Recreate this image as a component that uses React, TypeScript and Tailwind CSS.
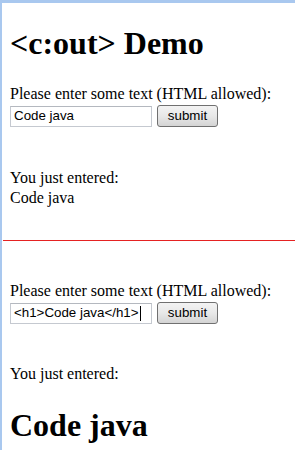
import React from "react";

function Form({ value, caret }: { value: string; caret?: boolean }) {
  return (
    <div className="flex flex-col">
      <div className="text-[16px] leading-[18px]">Please enter some text (HTML allowed):</div>
      <div className="flex items-center gap-[5px] mt-[2px]">
        <div className="w-[142px] h-[21px] border border-[#c5c9d0] border-t-[#b4b8bf] bg-white flex items-center pl-[3px] text-[13.33px] font-['Liberation_Sans',Arial,sans-serif] text-black">
          <span>{value}</span>
          {caret && <span className="inline-block w-px h-[15px] bg-black ml-[1px]" />}
        </div>
        <div className="w-[61px] h-[22px] rounded-[3px] border border-[#707070] bg-gradient-to-b from-[#f3f3f3] via-[#e8e8e8] to-[#d4d4d4] flex items-center justify-center text-[13.33px] font-['Liberation_Sans',Arial,sans-serif] text-black">
          submit
        </div>
      </div>
    </div>
  );
}

export default function App() {
  return (
    <div className="w-[295px] h-[450px] overflow-hidden bg-white border-t-[3px] border-l-2 border-[#a9c8ef] font-['Liberation_Serif','Times_New_Roman',serif] text-black flex flex-col">
      <div className="pl-[8px] flex flex-col">
        <h1 className="text-[32px] font-bold leading-[36px] mt-[22px]">&lt;c:out&gt; Demo</h1>
        <div className="mt-[24px]">
          <Form value="Code java" />
        </div>
        <div className="mt-[41px] text-[16px] leading-[20px]">You just entered:</div>
        <div className="text-[16px] leading-[20px]">Code java</div>
      </div>
      <div className="mt-[32px] ml-px h-0 border-t border-[#e52222]" />
      <div className="pl-[8px] flex flex-col">
        <div className="mt-[41px]">
          <Form value="<h1>Code java</h1>" caret />
        </div>
        <div className="mt-[40px] text-[16px] leading-[20px]">You just entered:</div>
        <h1 className="text-[32px] font-bold leading-[36px] mt-[23px]">Code java</h1>
      </div>
    </div>
  );
}
